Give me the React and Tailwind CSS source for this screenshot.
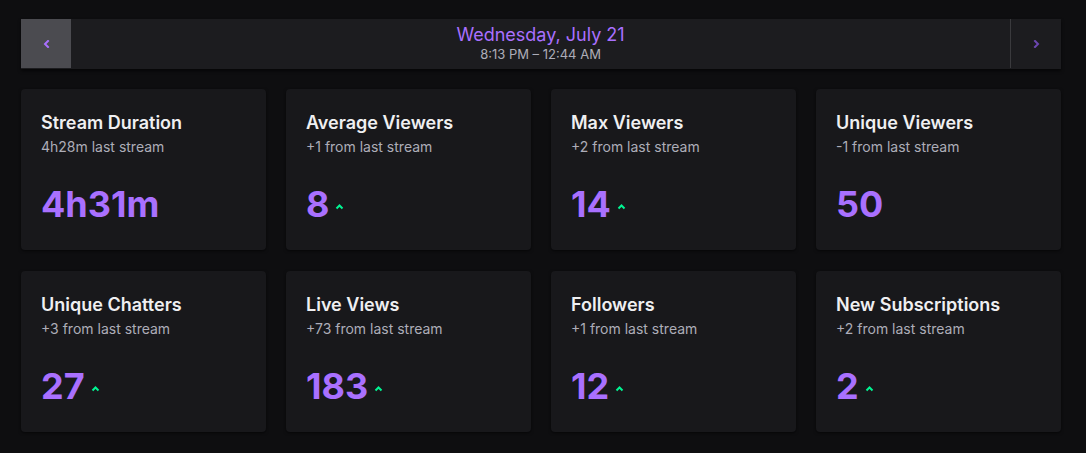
const stats = [
  { title: 'Stream Duration', sub: '4h28m last stream', value: '4h31m', up: false },
  { title: 'Average Viewers', sub: '+1 from last stream', value: '8', up: true },
  { title: 'Max Viewers', sub: '+2 from last stream', value: '14', up: true },
  { title: 'Unique Viewers', sub: '-1 from last stream', value: '50', up: false },
  { title: 'Unique Chatters', sub: '+3 from last stream', value: '27', up: true },
  { title: 'Live Views', sub: '+73 from last stream', value: '183', up: true },
  { title: 'Followers', sub: '+1 from last stream', value: '12', up: true },
  { title: 'New Subscriptions', sub: '+2 from last stream', value: '2', up: true }
];

function Chevron({ dir, color }) {
  const d = dir === 'left' ? 'M5 1 L2 4 L5 7' : 'M2 1 L5 4 L2 7';
  return (
    <svg width="7" height="8" viewBox="0 0 7 8" fill="none">
      <path d={d} stroke={color} strokeWidth="2" strokeLinecap="square" />
    </svg>
  );
}

function UpCaret() {
  return (
    <svg width="9" height="6" viewBox="0 0 9 6" fill="none" className="ml-[6px] mt-[5px]">
      <path d="M1.5 4.5 L4.5 1.5 L7.5 4.5" stroke="#00f593" strokeWidth="2" />
    </svg>
  );
}

export default function App() {
  return (
    <main className="min-h-[453px] bg-[#0e0e10] pl-[21px] pr-[25px] pt-[19px] font-['Inter',sans-serif]">
      <div className="w-[1040px]">
        <div className="flex h-[50px] bg-[#1c1c1f] shadow-[0_2px_3px_rgba(0,0,0,0.6)]">
          <button className="w-[50px] h-[49px] bg-[#4b4b50] flex items-center justify-center">
            <Chevron dir="left" color="#a970ff" />
          </button>
          <div className="flex-1 flex flex-col items-center justify-center pb-[2px]">
            <div className="text-[18px] leading-[22px] text-[#a970ff]">Wednesday, July 21</div>
            <div className="text-[13px] leading-[16px] text-[#adadb8]">8:13 PM – 12:44 AM</div>
          </div>
          <button className="w-[51px] h-[49px] border-l border-[#3a3a3d] flex items-center justify-center">
            <Chevron dir="right" color="#6b46b0" />
          </button>
        </div>

        <div className="grid grid-cols-4 gap-x-[20px] gap-y-[21px] mt-[20px]">
          {stats.map((s, i) => (
            <div key={i} className="h-[161px] bg-[#18181b] rounded-[4px] shadow-[0_1px_3px_rgba(0,0,0,0.6)] px-[20px] pt-[20px]">
              <div className="text-[18px] leading-[28px] font-semibold text-[#efeff1]">{s.title}</div>
              <div className="text-[14px] leading-[20px] text-[#adadb8]">{s.sub}</div>
              <div className="flex items-center mt-[27px]">
                <span className="text-[36px] leading-[40px] font-bold text-[#a970ff]">{s.value}</span>
                {s.up && <UpCaret />}
              </div>
            </div>
          ))}
        </div>
      </div>
    </main>
  );
}
